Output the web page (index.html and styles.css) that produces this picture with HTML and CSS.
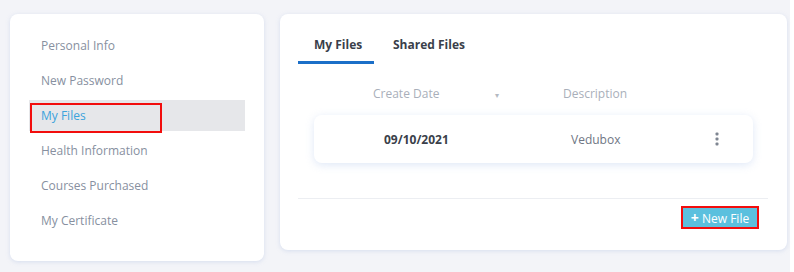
FILE: index.html
```html
<!DOCTYPE html>
<html lang="en">
<head>
  <meta charset="UTF-8">
  <title>My Files</title>
  <link rel="stylesheet" href="styles.css">
</head>
<body>
  <div class="page">
    <div class="side-card">
      <ul class="side-menu">
        <li class="side-item">Personal Info</li>
        <li class="side-item">New Password</li>
        <li class="side-item active"><span class="mark">My Files</span></li>
        <li class="side-item">Health Information</li>
        <li class="side-item">Courses Purchased</li>
        <li class="side-item">My Certificate</li>
      </ul>
    </div>

    <div class="main-card">
      <div class="tabs">
        <div class="tab selected">My Files</div>
        <div class="tab">Shared Files</div>
      </div>

      <div class="table-head">
        <div class="col-date">Create Date <span class="caret">&#9662;</span></div>
        <div class="col-desc">Description</div>
      </div>

      <div class="file-row">
        <div class="col-date date">09/10/2021</div>
        <div class="col-desc">Vedubox</div>
        <div class="kebab">
          <svg width="4" height="14" viewBox="0 0 4 14">
            <rect x="0.5" y="0.5" width="3" height="3" rx="1" fill="#7f8692"/>
            <rect x="0.5" y="5.5" width="3" height="3" rx="1" fill="#7f8692"/>
            <rect x="0.5" y="10.5" width="3" height="3" rx="1" fill="#7f8692"/>
          </svg>
        </div>
      </div>

      <div class="card-foot">
        <div class="btn-mark">
          <button class="btn-new"><b>+</b> New File</button>
        </div>
      </div>
    </div>
  </div>
</body>
</html>
```

FILE: styles.css
```css
body {
  margin: 0;
  background-color: #fff;
  font-family: 'Open Sans', 'Liberation Sans', sans-serif;
}

.page {
  width: 790px;
  height: 272px;
  background-color: #f3f4f8;
  box-sizing: border-box;
  padding: 14px 0 0 10px;
  display: flex;
  align-items: flex-start;
  gap: 16px;
}

.side-card {
  width: 254px;
  height: 247px;
  background: #fff;
  border-radius: 8px;
  box-shadow: 0 1px 4px rgba(160, 180, 220, 0.35);
  box-sizing: border-box;
  padding: 14px 19px 0 19px;
}

.side-menu {
  list-style: none;
  margin: 0;
  padding: 0;
}

.side-item {
  height: 35px;
  line-height: 35px;
  padding-left: 12px;
  font-size: 12px;
  color: #8790a0;
  white-space: nowrap;
}

.side-item.active {
  background: #e6e7ea;
  height: 31px;
  line-height: 31px;
  margin: 2px 0;
  padding-left: 0;
  color: #3ba3dc;
}

.side-item .mark {
  display: inline-block;
  box-sizing: border-box;
  width: 132px;
  height: 30px;
  line-height: 21px;
  margin: 3px 0 0 1px;
  padding-left: 9px;
  border: 2px solid #f20d0d;
  vertical-align: top;
}

.main-card {
  width: 507px;
  height: 236px;
  background: #fff;
  border-radius: 8px;
  box-shadow: 0 1px 4px rgba(160, 180, 220, 0.35);
  box-sizing: border-box;
  padding: 0 19px 0 18px;
}

.tabs {
  display: flex;
  height: 50px;
}

.tab {
  font-size: 12px;
  font-weight: 700;
  color: #3a3f4a;
  padding: 22px 19px 0 19px;
  box-sizing: border-box;
  height: 50px;
  white-space: nowrap;
}

.tab.selected {
  width: 76px;
  padding: 22px 0 0 16px;
  border-bottom: 3px solid #1b6fc8;
}

.table-head {
  display: flex;
  height: 51px;
  box-sizing: border-box;
  padding: 8px 0 0 75px;
  align-items: center;
  font-size: 12px;
  color: #a9afba;
}

.col-date {
  width: 190px;
}

.caret {
  font-size: 8px;
  margin-left: 52px;
  color: #b4b9c2;
}

.col-desc {
  flex: 1;
}

.file-row {
  margin-left: 16px;
  width: 439px;
  height: 48px;
  background: #fff;
  border-radius: 8px;
  box-shadow: 0 2px 8px rgba(150, 180, 230, 0.3);
  display: flex;
  align-items: center;
  padding-left: 70px;
  box-sizing: border-box;
  font-size: 12px;
  color: #6f7684;
}

.file-row .col-date {
  width: 187px;
}

.date {
  font-weight: 700;
  color: #3a3f4a;
}

.file-row .col-desc {
  flex: none;
  width: 144px;
}

.kebab {
  display: flex;
  align-items: center;
}

.card-foot {
  margin-top: 35px;
  border-top: 1px solid #eceef2;
  padding-top: 7px;
  display: flex;
  justify-content: flex-end;
}

.btn-mark {
  border: 2px solid #f20d0d;
  margin-right: 9px;
  line-height: 0;
}

.btn-new {
  width: 74px;
  height: 19px;
  background: #5bc0de;
  color: #fff;
  border: none;
  font-family: inherit;
  font-size: 12px;
  padding: 0;
  line-height: 19px;
  white-space: nowrap;
}

.btn-new b {
  font-size: 14px;
}
```
